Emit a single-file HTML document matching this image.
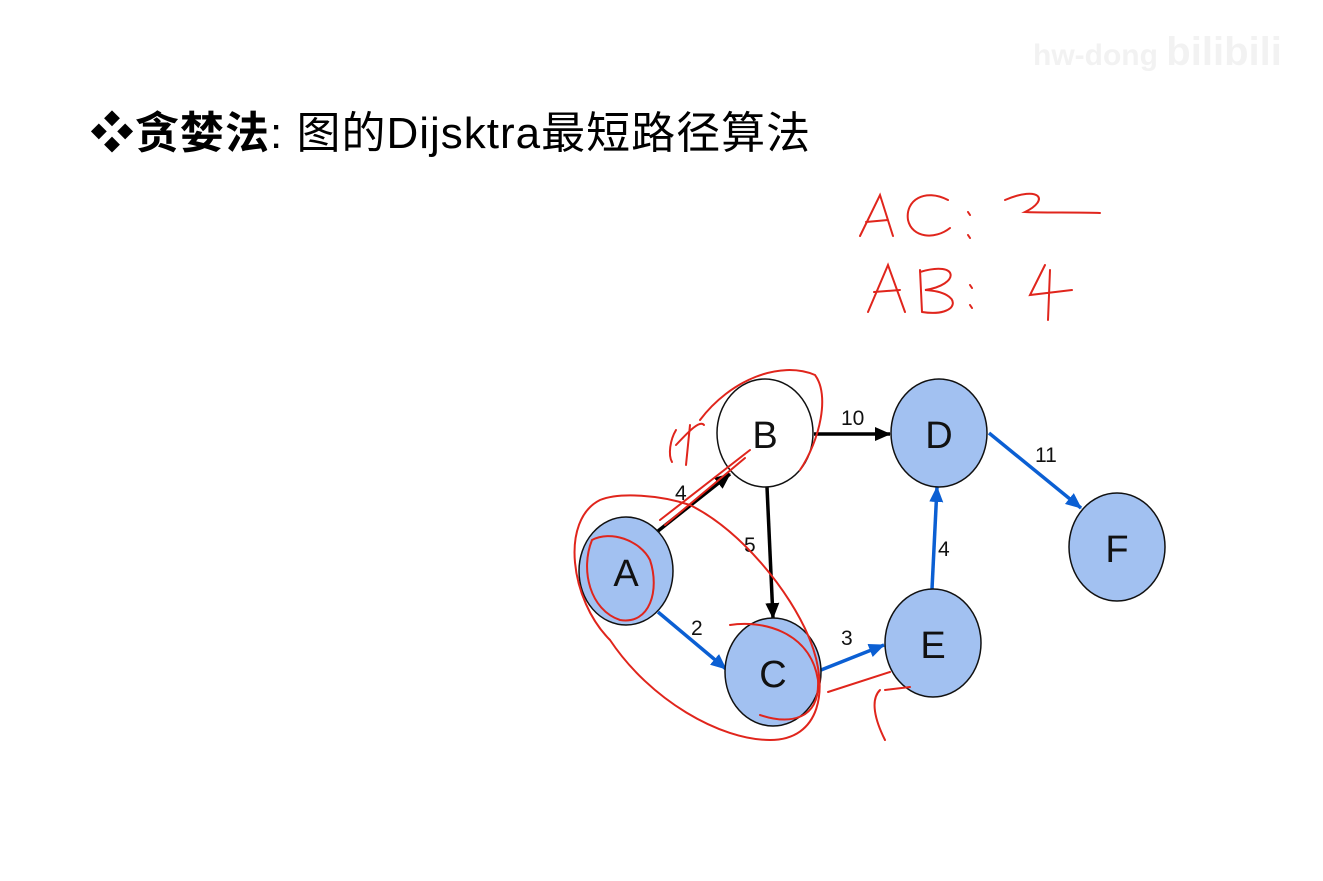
<!DOCTYPE html>
<html><head><meta charset="utf-8"><style>
html,body{margin:0;padding:0;background:#fff;}
body{width:1323px;height:881px;overflow:hidden;position:relative;font-family:"Liberation Sans","Noto Sans CJK SC",sans-serif;}
.title{position:absolute;left:90px;top:106px;font-size:44px;color:#000;white-space:nowrap;line-height:56px;letter-spacing:1px;}
.title b{font-weight:bold;}
.wm{position:absolute;left:1033px;top:30px;font-size:30px;color:#f2f2f2;font-weight:bold;white-space:nowrap;}
svg{position:absolute;left:0;top:0;}
</style></head><body>
<div class="wm">hw-dong <span style="font-size:40px">bilibili</span></div>
<div class="title"><b>❖贪婪法</b>:&nbsp;图的Dijsktra最短路径算法</div>
<svg width="1323" height="881" viewBox="0 0 1323 881">
<defs>
<marker id="ak" markerWidth="16" markerHeight="14" refX="15" refY="7" orient="auto" markerUnits="userSpaceOnUse" viewBox="0 0 16 14"><path d="M0,0 L16,7 L0,14z" fill="#000"/></marker>
<marker id="ab" markerWidth="16" markerHeight="14" refX="15" refY="7" orient="auto" markerUnits="userSpaceOnUse" viewBox="0 0 16 14"><path d="M0,0 L16,7 L0,14z" fill="#0b5fd3"/></marker>
</defs>
<g stroke-width="3.5" fill="none">
<line x1="658" y1="531" x2="730" y2="474" stroke="#000" marker-end="url(#ak)"/>
<line x1="767" y1="487" x2="773" y2="618" stroke="#000" marker-end="url(#ak)"/>
<line x1="814" y1="434" x2="890" y2="434" stroke="#000" marker-end="url(#ak)"/>
<line x1="658" y1="612" x2="726" y2="669" stroke="#0b5fd3" marker-end="url(#ab)"/>
<line x1="821" y1="670" x2="884" y2="645" stroke="#0b5fd3" marker-end="url(#ab)"/>
<line x1="932" y1="589" x2="937" y2="487" stroke="#0b5fd3" marker-end="url(#ab)"/>
<line x1="989" y1="433" x2="1081" y2="508" stroke="#0b5fd3" marker-end="url(#ab)"/>
</g>
<g stroke="#111" stroke-width="1.5">
<ellipse cx="626" cy="571" rx="47" ry="54" fill="#a2c1f1"/>
<ellipse cx="765" cy="433" rx="48" ry="54" fill="#fff"/>
<ellipse cx="773" cy="672" rx="48" ry="54" fill="#a2c1f1"/>
<ellipse cx="939" cy="433" rx="48" ry="54" fill="#a2c1f1"/>
<ellipse cx="933" cy="643" rx="48" ry="54" fill="#a2c1f1"/>
<ellipse cx="1117" cy="547" rx="48" ry="54" fill="#a2c1f1"/>
</g>
<g font-family="Liberation Sans,sans-serif" font-size="38" text-anchor="middle" fill="#111">
<text x="626" y="586">A</text><text x="765" y="448">B</text><text x="773" y="687">C</text>
<text x="939" y="448">D</text><text x="933" y="658">E</text><text x="1117" y="562">F</text>
</g>
<g font-family="Liberation Sans,sans-serif" font-size="21" fill="#111">
<text x="675" y="500">4</text><text x="744" y="552">5</text><text x="841" y="425">10</text>
<text x="1035" y="462">11</text><text x="691" y="635">2</text><text x="841" y="645">3</text><text x="938" y="556">4</text>
</g>
<g stroke="#e0251c" stroke-width="2" fill="none" stroke-linecap="round">
<path d="M600,500 C560,520 570,600 610,640 C650,700 720,740 770,740 C820,740 830,690 810,640 C790,590 740,530 690,505 C660,495 620,492 600,500Z"/>
<path d="M592,540 C580,570 590,610 620,620 C650,625 660,590 650,560 C640,540 610,530 592,540"/>
<path d="M730,625 C760,620 810,630 818,680 C820,720 790,725 760,715"/>
<path d="M700,420 C730,380 780,360 815,375 C830,395 820,440 800,470"/>
<path d="M676,430 C670,440 668,455 672,462 M676,445 C690,430 700,420 704,425 M690,425 L686,465"/>
<path d="M660,520 L750,450 M665,525 L745,458"/>
<path d="M828,692 L890,672 M880,690 C870,700 875,720 885,740 M885,690 L910,687"/>
<path d="M860,236 L880,195 L893,236 M866,222 L888,220 M948,200 C925,188 905,200 908,220 C912,238 935,240 950,228 M968,212 L970,215 M968,235 L970,238 M1005,200 C1040,185 1050,200 1025,212 C1040,213 1080,212 1100,213"/>
<path d="M868,312 L888,265 L905,312 M874,292 L900,290 M920,270 L922,312 M920,272 C960,260 960,285 925,290 C965,292 960,318 922,312 M970,285 L972,288 M970,305 L972,308 M1045,265 L1030,295 L1072,290 M1050,270 L1048,320"/>
</g>
</svg>
</body></html>
